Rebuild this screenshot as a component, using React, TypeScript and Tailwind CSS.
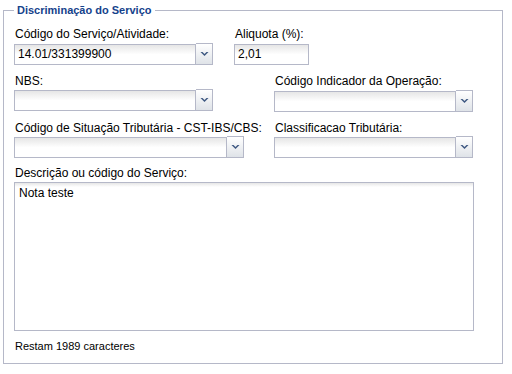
import React from "react";

const font = { fontFamily: '"Liberation Sans", Arial, sans-serif' };

function Arrow() {
  return (
    <svg width="9" height="6" viewBox="0 0 9 6">
      <path d="M0.5 1 L4.5 5 L8.5 1 L6.5 1 L4.5 3 L2.5 1 Z" fill="#3c5680" />
    </svg>
  );
}

function Select({ w, value }: { w: string; value?: string }) {
  return (
    <div className="flex items-start">
      <div
        className={`${w} h-[21px] border border-[#b5b8c8] bg-gradient-to-b from-[#e6e6e6] via-white to-white px-[3px] text-[12px] leading-[19px] text-black`}
      >
        {value}
      </div>
      <div className="w-[17px] h-[22px] -mt-[1px] border border-l-0 border-[#b5b8c8] bg-gradient-to-b from-white to-[#dfe3e8] flex items-center justify-center">
        <Arrow />
      </div>
    </div>
  );
}

function Label({ children }: { children: React.ReactNode }) {
  return <div className="text-[12px] leading-[15px] text-black pl-[1px]">{children}</div>;
}

export default function App() {
  return (
    <div className="w-[512px] h-[374px] bg-white" style={font}>
      <fieldset className="ml-[3px] mt-[3px] w-[500px] h-[361px] border border-[#b5b8c8] px-[10px] pb-0">
        <legend className="px-[3px] text-[11px] leading-[15px] font-bold text-[#15428b]">
          Discriminação do Serviço
        </legend>
        <div className="flex pt-[9px]">
          <div className="w-[220px] flex flex-col gap-[2px]">
            <Label>Código do Serviço/Atividade:</Label>
            <Select w="w-[182px]" value="14.01/331399900" />
          </div>
          <div className="flex flex-col gap-[2px]">
            <Label>Aliquota (%):</Label>
            <div className="w-[75px] h-[21px] border border-[#b5b8c8] bg-gradient-to-b from-[#e6e6e6] via-white to-white px-[3px] text-[12px] leading-[19px] text-black">
              2,01
            </div>
          </div>
        </div>
        <div className="flex pt-[9px]">
          <div className="w-[260px] flex flex-col gap-[1px]">
            <Label>NBS:</Label>
            <Select w="w-[182px]" />
          </div>
          <div className="flex flex-col gap-[2px]">
            <Label>Código Indicador da Operação:</Label>
            <Select w="w-[182px]" />
          </div>
        </div>
        <div className="flex pt-[9px]">
          <div className="w-[260px] flex flex-col gap-[1px]">
            <Label>Código de Situação Tributária - CST-IBS/CBS:</Label>
            <Select w="w-[213px]" />
          </div>
          <div className="flex flex-col gap-[1px]">
            <Label>Classificacao Tributária:</Label>
            <Select w="w-[182px]" />
          </div>
        </div>
        <div className="flex flex-col gap-[1px] pt-[8px]">
          <Label>Descrição ou código do Serviço:</Label>
          <div className="w-[460px] h-[149px] border border-[#b5b8c8] bg-gradient-to-b from-[#e6e6e6] via-white to-white bg-[length:100%_8px] bg-no-repeat px-[4px] pt-[3px] text-[12px] leading-[15px] text-black">
            Nota teste
          </div>
        </div>
        <div className="pt-[9px] pl-[1px] text-[11px] leading-[13px] text-black">Restam 1989 caracteres</div>
      </fieldset>
    </div>
  );
}
